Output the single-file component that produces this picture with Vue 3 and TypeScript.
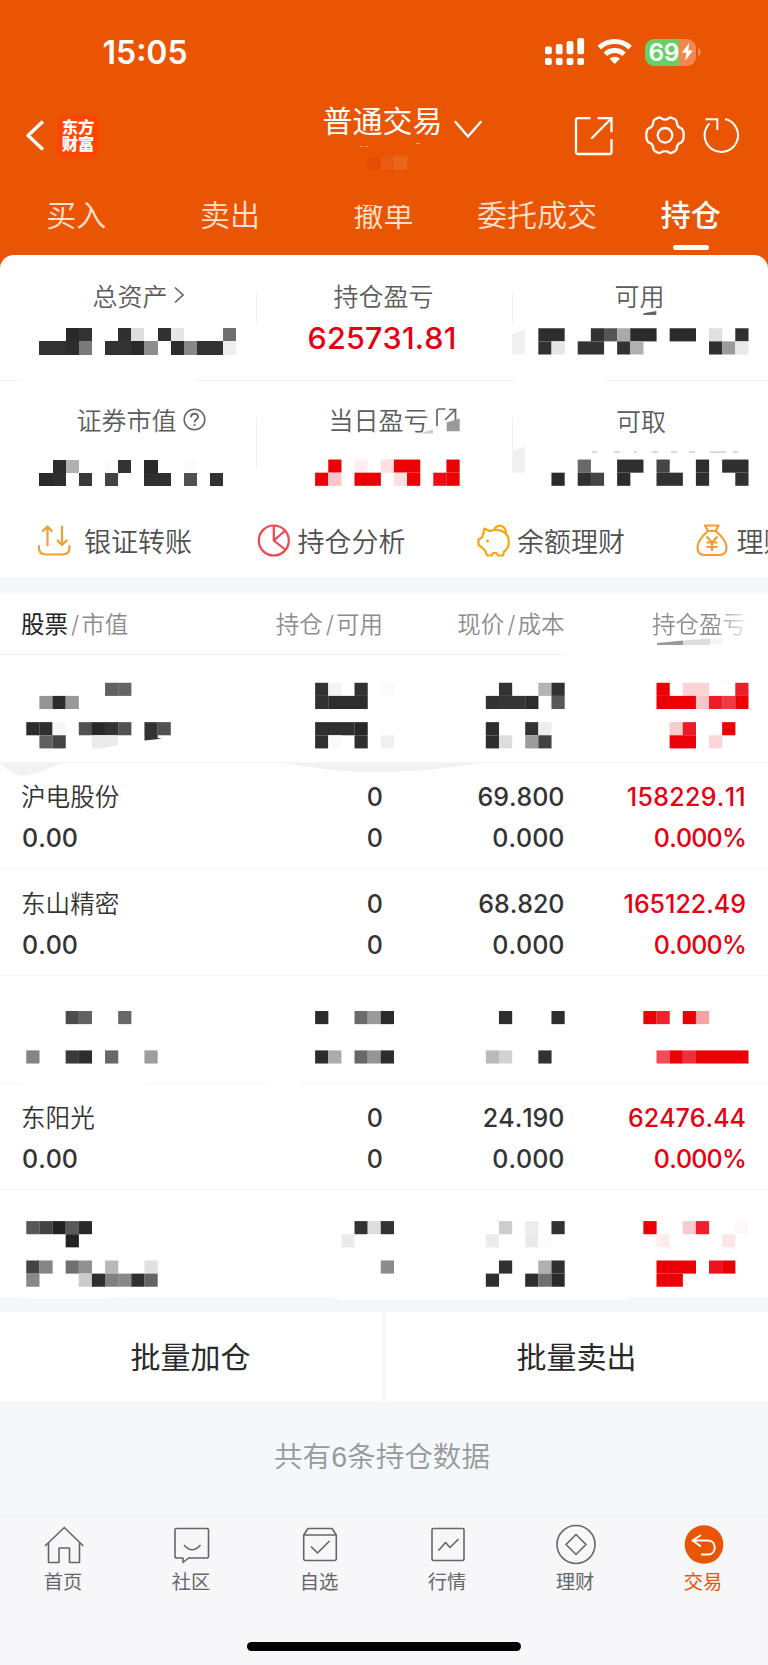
<script setup lang="ts">
interface Block {
  x: number
  y: number
  w: number
  fill: string
}

const CELL = 13.13
const RED = '#eb0005'

/* Each entry is "column[-column]:tone"; two-digit tones are greys, "r" is the gain red. */
function blocks(rows: Record<number, string>): Block[] {
  const out: Block[] = []
  for (const [row, line] of Object.entries(rows)) {
    for (const part of line.split(' ')) {
      const [span, tone] = part.split(':')
      const [a, b] = span.split('-').map(Number)
      const fill = tone === 'r' ? RED : tone.length === 2 ? `#${tone}${tone}${tone}` : `#${tone}`
      out.push({ x: a * CELL, y: Number(row) * CELL, w: ((b ?? a) - a + 1) * CELL, fill })
    }
  }
  return out
}

const account = blocks({ 12: '28:e64d00 29:e95d12 30:eb661d' })

const assets = blocks({
  25: '5:29 6:33 9:30 10:dd 12:32 13:e6 17:70',
  26: '3-4:33 5:2d 6:7b 8-9:33 10:2a 11:8d 13:2c 14:88 15-16:33 17:ee',
})
const available = blocks({
  25: '41-42:2d 45:32 46:55 47:aa 48-49:2b 51-52:2b 54:e0 56:30',
  26: '41:32 42:e6 44-45:33 47:33 48:b0 54:30 55:9b 56:e9',
})
const market = blocks({
  35: '4:2c 5:b1 8:fc 9:33 11:2a 14:fc',
  36: '3:2a 4:2e 6:39 8:43 11-12:2f 14:50 16:32',
})
const dayProfit = blocks({
  35: '25:r 27:ffefef 29:ffe0e2 30-31:r 34:r',
  36: '24:r 25:fbc5c9 27-28:r 30:ffdfe2 31:r 33:ec0b19 34:r',
})
const withdrawable = blocks({
  35: '44:69 47-48:2f 50:46 53:2d 55-56:30',
  36: '42:2a 44:30 45:44 47:2c 50-51:31 53:2e 56:31',
})

const hiddenA = blocks({
  52: '8:61 9:65 24:32 25:f4 27:32 29:fb 38:33 41:b4 42:30 50:r 52-53:fbd3d5 56:ed1f2c',
  53: '3:94 4:2c 5:99 24:32 25-27:2d 37:32 38-39:35 40:2d 42:57 50-52:r 53:fbc4c8 54:ee1c29 55:f03943 56:r',
  55: '2:2c 3:30 4:f7 6:51 7:29 8:32 9:52 11:33 12:50 24-26:2f 27:27 37:2e 40:32 41:ee 51:fbcacd 52:ee1a25 55:r',
  56: '3:60 4:45 24:2f 25:fa 27:2f 29:f0 37:2e 38:dd 40:9c 41:43 51-52:r 54:fbd5d7',
})
const hiddenD = blocks({
  77: '5:4c 6:62 9:68 24:2c 27:6b 28:9b 29:2c 38:2d 42:2d 49:r 50:ee232d 52:r 53:f7a1a5',
  80: '2:84 5:3a 6:2e 8:68 11:9d 24:2c 25:ab 27:68 28:95 29:2c 37:ba 38:d2 41:32 50:f34c58 51:r 52:f03039 53-56:r',
})
const hiddenF = blocks({
  93: '2:58 3:43 4:22 5:59 6:2a 27:33 28:dd 29:33 38:cc 40:ec 42:32 49:r 52:fbcacd 53:ed202c 56:fff7f7',
  94: '5:23 26:ea 37:eb 40:e9 41:fc 50:ffeced 55:fde5e7',
  96: '2:44 3:86 5:70 6:91 8:b8 11:e0 29:8c 38:32 41:b0 42:30 50-52:r 54:ee121e 55:r',
  97: '2:88 6:ca 7:2e 8:80 9:87 10:2f 11:63 37:2e 40:2d 41:6f 42:2b 50-51:r',
})

interface Holding {
  id: string
  name?: string
  price?: string
  profit?: string
  top: number
  mosaic?: Block[]
}
const holdings: Holding[] = [
  { id: 'a', top: 655, mosaic: hiddenA },
  { id: 'b', top: 762, name: '沪电股份', price: '69.800', profit: '158229.11' },
  { id: 'c', top: 869, name: '东山精密', price: '68.820', profit: '165122.49' },
  { id: 'd', top: 976, mosaic: hiddenD },
  { id: 'e', top: 1083, name: '东阳光', price: '24.190', profit: '62476.44' },
  { id: 'f', top: 1190, mosaic: hiddenF },
]
const tabs: string[] = ['买入', '卖出', '撤单', '委托成交', '持仓']
</script>

<template>
  <div class="app">
    <header class="top">
      <div class="status">
        <span class="clock">15:05</span>
        <svg class="signal" width="40" height="28" viewBox="545 38 40 28" fill="#fff">
          <rect x="545" y="46.5" width="6.8" height="7.8" rx="2" />
          <rect x="555.8" y="44" width="6.8" height="10.3" rx="2" />
          <rect x="566.6" y="41" width="6.8" height="13.3" rx="2" />
          <rect x="577.3" y="38" width="6.8" height="16.3" rx="2" />
          <rect x="545" y="58" width="6.8" height="7" rx="2" />
          <rect x="555.8" y="58" width="6.8" height="7" rx="2" />
          <rect x="566.6" y="58" width="6.8" height="7" rx="2" />
          <rect x="577.3" y="58" width="6.8" height="7" rx="2" />
        </svg>
        <svg class="wifi" width="36" height="28" viewBox="597 38 36 28" fill="none" stroke="#fff" stroke-width="5">
          <path d="M599.3 47.6a22.4 22.4 0 0 1 30.8 0" />
          <path d="M605.3 54.2a13.6 13.6 0 0 1 18.8 0" />
          <path d="M614.7 64l-5.2-5.2a7.6 7.6 0 0 1 10.4 0z" fill="#fff" stroke="none" />
        </svg>
        <div class="battery">
          <span class="level">69</span>
          <svg width="13" height="20" viewBox="0 0 13 20"><path d="M8.5 0.5L0.8 10.8h4.7L4 19l8-10.5H7.2z" fill="#fff" /></svg>
        </div>
        <svg class="cap" width="4" height="10" viewBox="0 0 4 10"><path d="M0 1a4.2 4.2 0 0 1 0 8z" fill="#f08a55" /></svg>
      </div>

      <div class="nav">
        <svg class="back" width="22" height="36" viewBox="24 118 22 36" fill="none" stroke="#fff" stroke-width="3.4" stroke-linejoin="round">
          <path d="M43 121.500L28 135.500l15 14" />
        </svg>
        <div class="logo"><span>东方</span><span>财富</span></div>
        <div class="account">
          <div class="title">
            <span>普通交易</span>
            <svg width="30" height="20" viewBox="453 121 30 20" fill="none" stroke="#fff" stroke-width="2.4" stroke-linecap="round">
              <path d="M455.5 124L468 138.5 480.7 124" />
            </svg>
          </div>
          <svg class="mask" width="100" height="34" viewBox="340 142 100 34">
            <path d="M360 147.500h3M365 147.500h3M416 144.500h4" stroke="#f3a67c" />
            <rect v-for="(b, i) in account" :key="i" :x="b.x" :y="b.y" :width="b.w + 0.1" height="13.2" :fill="b.fill" />
          </svg>
        </div>
        <svg class="share" width="40" height="40" viewBox="574 116 40 40" fill="none" stroke="#fff" stroke-width="2.3">
          <path d="M590.500 118.200H578a2 2 0 0 0-2 2V152a2 2 0 0 0 2 2h31.500a2 2 0 0 0 2-2V139M597.500 118.200h14v14M611 118.700l-19.800 20" />
        </svg>
        <svg class="gear" width="42" height="40" viewBox="644 116 42 40" fill="none" stroke="#fff" stroke-width="2.3" stroke-linejoin="round">
          <path d="M659 117.500Q660.500 117.300 662 118.800Q665 120.300 668 118.800Q669.500 117.300 671 117.500L675 119.300Q677 120.500 676.800 123Q677.500 127.500 681.500 128.300Q683.700 130 683.700 135.300Q683.700 140.500 681.500 142.300Q677.500 143.200 676.800 147.500Q677 150 675 151.300L671 153.100Q669.500 153.300 668 151.800Q665 150.300 662 151.800Q660.500 153.300 659 153.100L655 151.300Q653 150 653.200 147.500Q652.500 143.200 648.500 142.300Q646.300 140.500 646.300 135.300Q646.300 130 648.500 128.300Q652.500 127.500 653.200 123Q653 120.500 655 119.300Z" />
          <circle cx="665" cy="135.300" r="7.300" />
        </svg>
        <svg class="reload" width="38" height="38" viewBox="703 117 38 38" fill="none" stroke="#fff" stroke-width="2">
          <path d="M725 119a16.700 16.700 0 1 1-15.500 4.500" />
          <path d="M705.500 119.200H717.300V130" />
        </svg>
      </div>

      <nav class="tabs">
        <span v-for="(t, i) in tabs" :key="t" class="tab" :class="{ on: i === 4, worn: i === 2 }">{{ t }}</span>
      </nav>
    </header>

    <section class="summary">
      <div class="trio first">
        <div class="cell">
          <div class="label raise">总资产<svg width="13" height="20" viewBox="0 0 13 20" fill="none" stroke="#666" stroke-width="1.700"><path d="M2 2.500l8 7.500-8 7.500" /></svg></div>
          <svg width="256" height="64" viewBox="0 316 256 64" shape-rendering="crispEdges">
            <rect v-for="(b, i) in assets" :key="i" :x="b.x" :y="b.y" :width="b.w" height="13.130" :fill="b.fill" />
          </svg>
        </div>
        <div class="cell">
          <div class="label">持仓盈亏</div>
          <div class="amount">625731.81</div>
        </div>
        <div class="cell">
          <div class="label">可用</div>
          <svg class="spill" width="256" height="64" viewBox="512 316 256 64">
            <path d="M643.300 313.200l13-2.200v4h-13z" fill="#666" />
            <path d="M512 334.500l13-5.500v25.300h-13z" fill="#f0f0f0" />
            <rect v-for="(b, i) in available" :key="i" :x="b.x" :y="b.y" :width="b.w + 0.1" height="13.130" :fill="b.fill" />
          </svg>
        </div>
      </div>
      <div class="trio second">
        <div class="cell">
          <div class="label">证券市值<svg class="help" width="23" height="23" viewBox="0 0 23 23" fill="none" stroke="#666" stroke-width="1.600"><circle cx="11.500" cy="11.500" r="10.300" /><path d="M8 9.200c0-4.600 7-4.600 7-.5 0 2.800-3.500 2.700-3.500 5.500M11.500 15.800v2" stroke-width="1.900" /></svg></div>
          <svg width="256" height="64" viewBox="0 441 256 64" shape-rendering="crispEdges">
            <rect v-for="(b, i) in market" :key="i" :x="b.x" :y="b.y" :width="b.w" height="13.130" :fill="b.fill" />
          </svg>
        </div>
        <div class="cell">
          <div class="label day">当日盈亏<svg class="jump" width="25" height="26" viewBox="435 408 25 26" fill="none" stroke="#666" stroke-width="1.700"><path d="M445.500 411H439a2 2 0 0 0-2 2v15M449 411.500h6.500V423M455 412l-10 10" /><path d="M446.700 424.500l13-4v12.800h-13z" fill="#999" stroke="none" /></svg></div>
          <svg class="spill" width="256" height="64" viewBox="256 441 256 64">
            <path d="M420 433.500l13-4v4z" fill="#ccc" />
            <rect v-for="(b, i) in dayProfit" :key="i" :x="b.x" :y="b.y" :width="b.w + 0.1" height="13.130" :fill="b.fill" />
          </svg>
        </div>
        <div class="cell">
          <div class="label low">可取</div>
          <svg width="256" height="64" viewBox="512 441 256 64">
            <path d="M592 452.200h5M614 452.200h6M634 452.200h3M652 452.200h6M671 452.200h6M689 452.200h6M710 452.200h16M733 452.200h5" stroke="#c4c4c4" stroke-width="1.300" />
            <path d="M512 451.500l13-5.500v26.700h-13z" fill="#f0f0f0" />
            <rect v-for="(b, i) in withdrawable" :key="i" :x="b.x" :y="b.y" :width="b.w + 0.1" height="13.130" :fill="b.fill" />
          </svg>
        </div>
      </div>
      <div class="tools">
        <div class="tool">
          <svg class="wide" width="34" height="34" viewBox="37 523 34 34" fill="none" stroke="#f0a030" stroke-width="2.200" stroke-linecap="round" stroke-linejoin="round">
            <path d="M39 546v2q0 6.500 7 6.500H62.500q7 0 7-6.500v-2M47.500 545.500V526.500l-4.700 4.500M47.500 526.500l4.300 4.500M62 526.500V545l-4.300-4.500M62 545l4.700-4.500" />
          </svg>银证转账
        </div>
        <div class="tool">
          <svg width="34" height="34" viewBox="257 523 34 34" fill="none" stroke="#ef4650" stroke-width="2.200">
            <circle cx="273.800" cy="540.500" r="15" /><path d="M273.800 525.500v15l12 9.500M273.800 540.500l11.500-10" />
          </svg>持仓分析
        </div>
        <div class="tool">
          <svg width="34" height="34" viewBox="474.500 523 34 34" fill="none" stroke="#f5a80c" stroke-width="2.200" stroke-linejoin="round">
            <path d="M482.500 531q0-2 .5-2.500l5.500 2.700q2.500-1.400 5.500-1.400c8.500 0 13.300 5 13.300 12 0 5-2 8-4.800 9.700l-1 4h-5l-1.500-2.500h-3.500l-1.500 2.500h-4.500l-1.500-4.500-3.500-3.500-3.500-2.500v-5.500l3.500-2z" /><path d="M492.500 530a6 6 0 1 1 11.500 3.500" /><circle cx="486" cy="541" r="1.100" fill="#f5a80c" stroke-width="1" />
          </svg>余额理财
        </div>
        <div class="tool">
          <svg width="34" height="34" viewBox="696 523 34 34" fill="none" stroke="#f59b30" stroke-width="2.100" stroke-linejoin="round">
            <path d="M705 525.500h13.500l-3 5.500h-7.500zM707.800 531c-5 4.500-10.300 10-10.300 16.500 0 5 2.500 7.500 7 7.500h15c4.500 0 7-2.500 7-7.500 0-6.500-5.500-12-10.800-16.500zM706.500 536.500l5.500 6 5.500-6M706.500 542.500h11M706.500 547h11M712 542.500v8.500" />
          </svg>理财
        </div>
      </div>
    </section>

    <section class="table">
      <div class="row head">
        <span class="left"><b>股票</b><i>/</i>市值</span>
        <span>持仓<i>/</i>可用</span>
        <span>现价<i>/</i>成本</span>
        <span class="fading">持仓盈亏
          <svg width="66" height="8" viewBox="656 637 66 8">
            <path d="M656 642l26-2.500v4.500h-26z" fill="#999" /><path d="M682 639.500l27-2v6.500h-27z" fill="#ddd" /><path d="M709 637.500l13-.5v6.500h-13z" fill="#f5f5f5" />
          </svg>
        </span>
      </div>
      <template v-for="h in holdings" :key="h.id">
        <div v-if="h.mosaic" class="masked" :class="h.id">
          <svg width="768" height="107" :viewBox="`0 ${h.top} 768 107`">
            <rect v-for="(b, i) in h.mosaic" :key="i" :x="b.x" :y="b.y" :width="b.w + 0.1" height="13.130" :fill="b.fill" />
            <g v-if="h.id === 'a'">
              <path d="M92 735.300h26v9.500l-15 3.800h-11z" fill="#ebebeb" />
              <path d="M144.500 735h13.200v3l4 .8-17.200 1.800z" fill="#333" />
            </g>
          </svg>
        </div>
        <div v-else class="row" :class="h.id">
          <svg v-if="h.id === 'b'" class="smear" width="480" height="14" viewBox="0 761 480 14" fill="#f2f2f2">
            <path d="M0 762h62c-10 3-26 12.500-38 12.500-12 0-19-8-24-12.500z" /><path d="M284 762h194c-20 4-60 9-100 9-42 0-70-5-94-9z" />
          </svg>
          <span class="left name">{{ h.name }}</span><span>0</span><span>{{ h.price }}</span><span class="gain" :class="h.id">{{ h.profit }}</span>
          <span class="left sum">0.00</span><span>0</span><span>0.000</span><span class="gain rate">0.000%</span>
        </div>
      </template>
    </section>

    <div class="gap">
      <svg width="768" height="15" viewBox="0 1297 768 15"><path d="M20 1297q4 1.700 20 1.700h55q20 0 30-1.700zM333 1297q5 3 12 3h280l5-3z" fill="#fff" /></svg>
    </div>
    <div class="batch"><button>批量加仓</button><button>批量卖出</button></div>
    <p class="total">共有6条持仓数据</p>

    <footer class="bar">
      <div class="dock">
        <a><svg viewBox="44 1522 40 44"><path d="M45 1546l19.300-18.500 19 18.500M48.500 1543v19.500h10.500v-14.500h10.500v14.500h10V1543" /></svg><span>首页</span></a>
        <a><svg viewBox="172 1522 40 44"><path d="M176.500 1528.500h30.500a1.500 1.500 0 0 1 1.500 1.500v26.500a1.500 1.500 0 0 1-1.500 1.500h-18.500l-5.500 4.500v-4.500h-6.500a1.500 1.500 0 0 1-1.500-1.500V1530a1.500 1.500 0 0 1 1.500-1.500zM184 1545q8 9.500 16.500 0" /></svg><span>社区</span></a>
        <a><svg viewBox="300 1522 40 44"><path d="M303.700 1535l4.300-6.500h24l4.300 6.500V1558.500a2 2 0 0 1-2 2h-28.600a2 2 0 0 1-2-2zM303.700 1535h32.600M311 1546.500l6.500 6.500 12-12" /></svg><span>自选</span></a>
        <a><svg viewBox="428 1522 40 44"><rect x="432" y="1528.500" width="32" height="32" rx="1.500" /><path d="M438.500 1550.500l7-8 4.500 5 8.500-8.500" /></svg><span>行情</span></a>
        <a><svg viewBox="556 1522 40 44"><circle cx="576" cy="1544.500" r="19" /><path d="M576 1534.500l10 10-10 10-10-10z" /></svg><span>理财</span></a>
        <a class="on"><svg viewBox="684 1522 40 44"><circle cx="704" cy="1544.500" r="19.300" fill="#ea5504" stroke="none" /><path d="M701 1535l-8.500 5.500 8.500 6M692.500 1540.500h15.500c9 0 9 14 0 14h-7" stroke="#fff" stroke-width="2" /></svg><span>交易</span></a>
      </div>
      <div class="home"></div>
    </footer>
  </div>
</template>

<style>
body {
  margin: 0;
  background: #fff;
}
</style>

<style scoped>
.app {
  width: 768px;
  height: 1665px;
  overflow: hidden;
  background: #f4f8fa;
  color: #333;
  font-family: Inter, 'Noto Sans CJK SC', sans-serif;
  font-weight: 350;
  font-kerning: none;
}
svg {
  display: block;
  flex: none;
}
.top {
  height: 271px;
  background: #ea5504;
  color: #fff;
}
.status {
  display: flex;
  align-items: center;
  height: 104px;
}
.clock {
  width: 442px;
  padding-left: 102.500px;
  box-sizing: border-box;
  margin-right: 103px;
  font-size: 32px;
  font-weight: 600;
  font-kerning: normal;
}
.wifi {
  margin-left: 12px;
}
.battery {
  display: flex;
  align-items: center;
  width: 51px;
  height: 27px;
  margin-left: 12px;
  border-radius: 9px;
  background: linear-gradient(90deg, #66cf68 34.500px, #f18750 34.500px);
}
.level {
  width: 35.500px;
  padding-left: 3.500px;
  box-sizing: border-box;
  font-size: 24.500px;
  font-weight: 600;
  letter-spacing: -0.300px;
}
.cap {
  margin-left: 2px;
}
.nav {
  display: flex;
  align-items: center;
  height: 62px;
  padding-top: 1px;
}
.back {
  margin-left: 24px;
}
.logo {
  display: flex;
  flex-direction: column;
  justify-content: center;
  align-items: center;
  width: 42px;
  height: 42px;
  margin-left: 11px;
  border-radius: 8px;
  background: #ff4500;
  font-size: 16.300px;
  line-height: 17.500px;
  font-weight: 900;
}
.account {
  width: 182px;
  height: 75px;
  margin-left: 223.500px;
}
.title {
  display: flex;
  align-items: center;
  height: 40px;
  font-size: 30px;
  font-weight: 400;
}
.title svg {
  margin: 20px 0 0 10px;
}
.mask {
  margin: 2.500px 0 0 17.500px;
}
.share {
  margin-left: 69.500px;
}
.gear {
  margin-left: 30px;
}
.reload {
  margin-left: 17px;
}
.tabs {
  display: grid;
  grid-template-columns: repeat(5, 1fr);
  height: 88px;
}
.tab {
  display: flex;
  flex-direction: column;
  align-items: center;
  height: 88px;
  padding: 26px 1px 0 0;
  box-sizing: border-box;
  font-size: 30px;
  line-height: 44px;
  color: #fde0d0;
}
.tab.worn {
  clip-path: inset(38px 0 0 0);
}
.tab.on {
  color: #fff;
  font-weight: 500;
}
.tab.on::after {
  content: '';
  width: 36px;
  height: 5px;
  margin: 8px 0 0 1px;
  border-radius: 3px;
  background: #fff;
}
.summary {
  position: relative;
  height: 321.500px;
  margin-top: -16px;
  border-radius: 14px 14px 0 0;
  background: #fff;
  overflow: hidden;
}
.trio {
  display: grid;
  grid-template-columns: repeat(3, 256px);
}
.first {
  height: 126px;
  background: linear-gradient(90deg, #f0f0f0 22px, #fff 22px 195px, #f0f0f0 195px 514px, #fff 514px 606px, #f0f0f0 606px) 0 100% / 100% 1px no-repeat;
}
.second {
  height: 124px;
}
.cell {
  position: relative;
  padding-top: 20px;
}
.second .cell {
  padding-top: 18px;
}
.cell + .cell::before {
  content: '';
  position: absolute;
  left: 0;
  top: 36px;
  width: 1px;
  height: 34px;
  background: #f1f1f1;
}
.second .cell + .cell::before {
  height: 53px;
}
.label {
  display: flex;
  align-items: center;
  justify-content: center;
  height: 40px;
  padding-right: 1px;
  font-size: 25px;
  color: #5c5c5c;
}
.cell > svg {
  margin-top: 1px;
}
.second .cell > svg {
  margin-top: 2px;
}
.spill {
  overflow: visible;
}
.label.raise {
  padding-left: 23px;
}
.label.raise svg {
  margin-left: 5px;
}
.label .help {
  margin-left: 6px;
}
.label .jump {
  margin-left: 6px;
}
.second .cell:first-child .label {
  padding-left: 27px;
}
.second .label.day {
  padding-left: 21px;
}
.label.low {
  padding-top: 1px;
  height: 39px;
  padding-left: 3px;
}
.amount {
  height: 46px;
  margin-top: 0;
  padding-right: 4px;
  line-height: 46px;
  text-align: center;
  font-size: 30.500px;
  letter-spacing: 0.200px;
  font-weight: 550;
  color: #e60012;
}
.tools {
  display: flex;
  height: 71px;
  padding-left: 37px;
}
.tool {
  display: flex;
  align-items: center;
  flex: none;
  width: 219.500px;
  height: 70px;
  font-size: 27px;
  white-space: nowrap;
  color: #505050;
}
.tool svg {
  margin-right: 7px;
}
.tool svg.wide {
  margin-right: 13px;
}
.table {
  margin-top: 17.500px;
  background: #fff;
}
.row {
  position: relative;
  display: grid;
  grid-template-columns: 200px 162px 181.500px 181.500px;
  grid-auto-rows: 40.500px;
  height: 107px;
  padding: 15px 22px 0 21px;
  box-sizing: border-box;
  line-height: 40px;
  text-align: right;
  font-size: 25px;
  font-weight: 550;
  border-bottom: 1px solid #f4f4f4;
}
.row.head {
  height: 61px;
  padding-top: 11px;
  font-size: 23.500px;
  font-weight: 350;
  color: #8c8c8c;
  border: 0;
  background: linear-gradient(90deg, #ececec 560px, #fff 564px) 0 100% / 100% 1px no-repeat;
}
.row.c {
  border-color: #f7f7f7;
}
.left {
  text-align: left;
}
.head b {
  font-weight: 400;
  color: #222;
}
.head i {
  padding: 0 2px 0 3px;
  font-weight: 300;
  font-style: normal;
}
.fading {
  position: relative;
  background: linear-gradient(90deg, #8c8c8c 150px, #eee 182px);
  background-clip: text;
  color: transparent;
}
.fading svg {
  position: absolute;
  left: 92px;
  bottom: 0;
}
.row .name {
  font-size: 24.600px;
  font-weight: 350;
}
.row .sum {
  padding-left: 1px;
}
.gain {
  color: #e60012;
}
.gain.b {
  letter-spacing: 0.300px;
}
.row .rate {
  letter-spacing: -0.800px;
}
.masked {
  height: 107px;
  box-sizing: border-box;
  overflow: hidden;
}
.masked.d + .row {
  background: linear-gradient(90deg, #f3f3f3 22px, #fff 22px 146px, #f3f3f3 146px 267px, #fff 267px 302px, #f3f3f3 302px) 0 0 / 100% 1px no-repeat;
}
.masked.a + .row {
  border-top: 1px solid #f4f4f4;
  padding-top: 14px;
}
.smear {
  position: absolute;
  left: 0;
  top: -1px;
}
.gap {
  height: 15px;
}
.batch {
  display: grid;
  grid-template-columns: 382px 382px;
  gap: 4px;
  height: 89.500px;
}
.batch button {
  padding: 0 1px 3px 0;
  border: 0;
  background: #fff;
  font: 400 30px 'Noto Sans CJK SC', sans-serif;
  color: #2a2a2a;
}
.total {
  height: 114.500px;
  margin: 0;
  padding-right: 4px;
  line-height: 111px;
  text-align: center;
  font-family: 'Liberation Sans', 'Noto Sans CJK SC', sans-serif;
  font-size: 28.600px;
  color: #999;
}
.bar {
  height: 149px;
  border-top: 1px solid #e9ecee;
  box-sizing: border-box;
  background: #f7f7fa;
}
.dock {
  display: grid;
  grid-template-columns: repeat(6, 128px);
  height: 125px;
}
.dock a {
  display: flex;
  flex-direction: column;
  align-items: center;
  padding-top: 5px;
  font-size: 19.300px;
  line-height: 32px;
  font-weight: 400;
  color: #666;
}
.dock span {
  padding-right: 2px;
}
.dock svg {
  width: 40px;
  height: 44px;
  fill: none;
  stroke: #666;
  stroke-width: 1.600;
  stroke-linejoin: round;
}
.dock a.on {
  color: #ea5504;
}
.home {
  width: 274px;
  height: 9px;
  margin: 0 auto;
  border-radius: 5px;
  background: #000;
}
</style>
